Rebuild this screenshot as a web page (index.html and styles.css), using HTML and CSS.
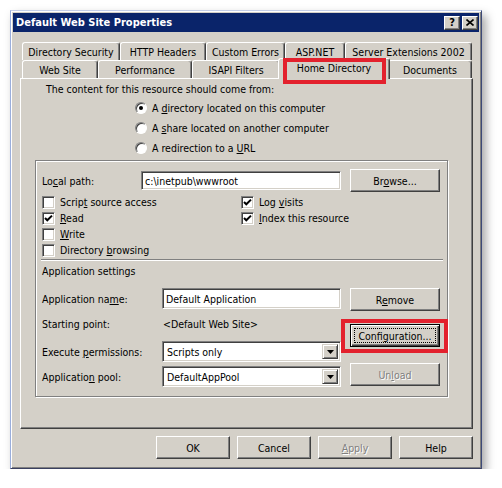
FILE: index.html
```html
<!DOCTYPE html>
<html lang="en">
<head>
    <meta charset="UTF-8">
    <title>Default Web Site Properties</title>
    <link rel="stylesheet" href="styles.css">
</head>
<body>
    <div class="window">

        <div class="titlebar">
            <span class="title">Default Web Site Properties</span>
            <div class="title-buttons">
                <span class="tbtn">?</span>
                <span class="tbtn">
                    <svg width="8" height="7" viewBox="0 0 8 7">
                        <path d="M0.5 0.5 L7.5 6.5 M7.5 0.5 L0.5 6.5" stroke="#000" stroke-width="1.6" fill="none"/>
                    </svg>
                </span>
            </div>
        </div>

        <div class="dialog">

            <div class="tab-row back">
                <div class="tab">Directory Security</div>
                <div class="tab">HTTP Headers</div>
                <div class="tab">Custom Errors</div>
                <div class="tab">ASP.NET</div>
                <div class="tab">Server Extensions 2002</div>
            </div>
            <div class="tab-row front">
                <div class="tab">Web Site</div>
                <div class="tab">Performance</div>
                <div class="tab">ISAPI Filters</div>
                <div class="tab selected marked">Home Directory</div>
                <div class="tab">Documents</div>
            </div>

            <div class="panel">
                <p class="intro">The content for this resource should come from:</p>

                <div class="source-list">
                    <div class="radio-row"><span class="radio checked"></span><span>A <u>d</u>irectory located on this computer</span></div>
                    <div class="radio-row"><span class="radio"></span><span>A <u>s</u>hare located on another computer</span></div>
                    <div class="radio-row"><span class="radio"></span><span>A redirection to a <u>U</u>RL</span></div>
                </div>

                <div class="group">
                    <div class="path-row">
                        <span class="path-label">Lo<u>c</u>al path:</span>
                        <div class="field path-field">c:\inetpub\wwwroot</div>
                        <button class="btn"><span>Br<u>o</u>wse...</span></button>
                    </div>

                    <div class="checks">
                        <div class="check-col">
                            <div class="check-row"><span class="checkbox"></span><span>Scrip<u>t</u> source access</span></div>
                            <div class="check-row"><span class="checkbox checked"><svg width="9" height="9" viewBox="0 0 9 9"><path d="M1 4 L3.3 6.3 L8 1.6" stroke="#000" stroke-width="2" fill="none"/></svg></span><span><u>R</u>ead</span></div>
                            <div class="check-row"><span class="checkbox"></span><span><u>W</u>rite</span></div>
                            <div class="check-row"><span class="checkbox"></span><span>Directory <u>b</u>rowsing</span></div>
                        </div>
                        <div class="check-col">
                            <div class="check-row"><span class="checkbox checked"><svg width="9" height="9" viewBox="0 0 9 9"><path d="M1 4 L3.3 6.3 L8 1.6" stroke="#000" stroke-width="2" fill="none"/></svg></span><span>Log <u>v</u>isits</span></div>
                            <div class="check-row"><span class="checkbox checked"><svg width="9" height="9" viewBox="0 0 9 9"><path d="M1 4 L3.3 6.3 L8 1.6" stroke="#000" stroke-width="2" fill="none"/></svg></span><span><u>I</u>ndex this resource</span></div>
                        </div>
                    </div>

                    <div class="separator"></div>

                    <div class="app-heading">Application settings</div>

                    <div class="app-settings">
                        <div class="app-fields">
                            <div class="app-row name-row">
                                <span class="app-label">Application na<u>m</u>e:</span>
                                <div class="field app-field">Default Application</div>
                            </div>
                            <div class="app-row start-row">
                                <span class="app-label">Starting point:</span>
                                <span class="app-value">&lt;Default Web Site&gt;</span>
                            </div>
                            <div class="app-row exec-row">
                                <span class="app-label">Execute <u>p</u>ermissions:</span>
                                <div class="field select">
                                    <span class="select-text">Scripts only</span>
                                    <span class="drop"><svg width="7" height="4" viewBox="0 0 7 4"><path d="M0 0 H7 L3.5 4 Z" fill="#000"/></svg></span>
                                </div>
                            </div>
                            <div class="app-row pool-row">
                                <span class="app-label">Applicatio<u>n</u> pool:</span>
                                <div class="field select">
                                    <span class="select-text">DefaultAppPool</span>
                                    <span class="drop"><svg width="7" height="4" viewBox="0 0 7 4"><path d="M0 0 H7 L3.5 4 Z" fill="#000"/></svg></span>
                                </div>
                            </div>
                        </div>

                        <div class="app-buttons">
                            <button class="btn"><span>R<u>e</u>move</span></button>
                            <button class="btn focused marked config"><span class="focus-ring"><span>Confi<u>g</u>uration...</span></span></button>
                            <button class="btn disabled unload"><span>Un<u>l</u>oad</span></button>
                        </div>
                    </div>
                </div>
            </div>

            <div class="footer">
                <button class="btn">OK</button>
                <button class="btn">Cancel</button>
                <button class="btn disabled"><span><u>A</u>pply</span></button>
                <button class="btn">Help</button>
            </div>

        </div>
    </div>
</body>
</html>
```

FILE: styles.css
```css
* {
    box-sizing: border-box;
}

body {
    margin: 0;
    background-color: #fff;
    font-family: "DejaVu Sans Condensed", "Liberation Sans", sans-serif;
    font-size: 10.5px;
    color: #000;
}

u {
    text-decoration: underline;
    text-underline-offset: 1px;
}

.window {
    width: 472px;
    height: 459px;
    margin: 10px 0 0 10px;
    padding: 2px;
    background-color: #d4d0c8;
    border: 1px solid;
    border-color: #c5cfe8 #3d4a78 #3a4060 #9aaedc;
    box-shadow: inset 1px 1px #fff, inset -1px -1px #808080, 4px 5px 9px rgba(0, 0, 0, 0.35);
    display: flex;
    flex-direction: column;
}

/* title bar */

.titlebar {
    height: 19px;
    background-color: #0a246a;
    color: #fff;
    display: flex;
    align-items: center;
    justify-content: space-between;
    padding: 0 1px 0 3px;
}

.title {
    font-weight: bold;
    font-size: 11px;
}

.title-buttons {
    display: flex;
    gap: 2px;
}

.tbtn {
    width: 16px;
    height: 14px;
    background-color: #d4d0c8;
    border: 1px solid;
    border-color: #fff #404040 #404040 #fff;
    box-shadow: inset -1px -1px #808080;
    display: flex;
    align-items: center;
    justify-content: center;
    color: #000;
    font-weight: bold;
    font-size: 11px;
    line-height: 1;
}

/* tabs */

.dialog {
    flex: 1;
    padding: 10px 6px 0 7px;
    display: flex;
    flex-direction: column;
}

.tab-row {
    display: flex;
    height: 18px;
    padding-left: 2px;
}

.tab {
    height: 18px;
    border: 1px solid;
    border-bottom: none;
    border-color: #fff #404040 transparent #fff;
    border-radius: 3px 3px 0 0;
    box-shadow: inset -1px 0 #808080;
    padding-top: 1px;
    line-height: 16px;
    text-align: center;
    white-space: nowrap;
}

.back .tab:nth-child(1) { width: 98px; }
.back .tab:nth-child(2) { width: 86px; }
.back .tab:nth-child(3) { width: 79px; }
.back .tab:nth-child(4) { width: 60px; }
.back .tab:nth-child(5) { width: 127px; }

.front .tab:nth-child(1) { width: 76px; }
.front .tab:nth-child(2) { width: 94px; }
.front .tab:nth-child(3) { width: 88px; }
.front .tab:nth-child(4) { width: 108px; }
.front .tab:nth-child(5) { width: 84px; }

.front .tab.selected {
    position: relative;
    z-index: 2;
    width: 112px;
    height: 21px;
    margin: -2px -2px -1px;
    background-color: #d4d0c8;
}

.tab.marked::after {
    content: "";
    position: absolute;
    left: 4px;
    right: 3px;
    top: -1px;
    bottom: -5px;
    border: 4px solid #e3212d;
}

/* panel */

.panel {
    height: 351px;
    border: 1px solid;
    border-color: #fff #404040 #404040 #fff;
    box-shadow: inset -1px -1px #808080;
    padding-top: 3px;
}

.intro {
    margin: 0 0 0 25px;
    line-height: 14px;
}

.source-list {
    margin: 2px 0 0 114px;
}

.radio-row {
    height: 20px;
    display: flex;
    align-items: center;
    gap: 5px;
}

.radio {
    width: 12px;
    height: 12px;
    border-radius: 50%;
    border: 1px solid;
    border-color: #808080 #fff #fff #808080;
    background-color: #fff;
    box-shadow: inset 1px 1px #404040;
    display: flex;
    align-items: center;
    justify-content: center;
}

.radio.checked::after {
    content: "";
    width: 4px;
    height: 4px;
    border-radius: 50%;
    background-color: #000;
}

.group {
    width: 413px;
    margin: 2px 0 0 14px;
    padding: 8px 7px 9px 6px;
    border: 1px solid #808080;
    box-shadow: inset 1px 1px #fff, 1px 1px #fff;
}

.path-row {
    height: 23px;
    display: flex;
    align-items: center;
}

.path-label {
    width: 99px;
}

.field {
    height: 19px;
    background-color: #fff;
    border: 1px solid;
    border-color: #808080 #fff #fff #808080;
    box-shadow: inset 1px 1px #404040, inset -1px -1px #d4d0c8;
    padding: 0 3px;
    display: flex;
    align-items: center;
    white-space: nowrap;
}

.path-field {
    width: 200px;
    margin-right: 9px;
}

.checks {
    display: flex;
    margin-top: 2px;
}

.check-col {
    width: 200px;
}

.check-row {
    height: 16px;
    display: flex;
    align-items: center;
    gap: 5px;
}

.checkbox {
    width: 13px;
    height: 13px;
    background-color: #fff;
    border: 1px solid;
    border-color: #808080 #fff #fff #808080;
    box-shadow: inset 1px 1px #404040, inset -1px -1px #d4d0c8;
    display: flex;
    align-items: center;
    justify-content: center;
}

.separator {
    height: 2px;
    margin: 1px -3px 0 -1px;
    border-top: 1px solid #808080;
    border-bottom: 1px solid #fff;
}

.app-heading {
    margin-top: 3px;
    line-height: 14px;
}

.app-settings {
    display: flex;
    justify-content: space-between;
    margin-top: 10px;
}

.app-fields {
    width: 299px;
}

.app-row {
    display: flex;
    align-items: center;
    height: 21px;
}

.app-label {
    width: 120px;
}

.app-value {
    padding-left: 1px;
}

.app-field {
    width: 179px;
    height: 21px;
}

.start-row {
    height: 16px;
    margin-top: 7px;
}

.exec-row {
    margin-top: 9px;
}

.pool-row {
    margin-top: 4px;
}

.select {
    width: 179px;
    height: 21px;
    padding: 2px 2px 2px 4px;
}

.select-text {
    flex: 1;
}

.drop {
    width: 16px;
    height: 100%;
    background-color: #d4d0c8;
    border: 1px solid;
    border-color: #d4d0c8 #404040 #404040 #d4d0c8;
    box-shadow: inset 1px 1px #fff, inset -1px -1px #808080;
    display: flex;
    align-items: center;
    justify-content: center;
}

.app-buttons {
    display: flex;
    flex-direction: column;
}

.config {
    margin-top: 13px;
}

.unload {
    margin-top: 16px;
}

/* buttons */

.btn {
    width: 90px;
    height: 23px;
    padding: 0;
    background-color: #d4d0c8;
    border: 1px solid;
    border-color: #fff #404040 #404040 #fff;
    box-shadow: inset -1px -1px #808080;
    font: inherit;
    color: #000;
    display: flex;
    align-items: center;
    justify-content: center;
}

.btn.focused {
    position: relative;
    padding: 3px;
    border-color: #000;
    box-shadow: inset 1px 1px #fff, inset -1px -1px #404040, inset -2px -2px #808080;
}

.focus-ring {
    flex: 1;
    align-self: stretch;
    border: 1px dotted #000;
    display: flex;
    align-items: center;
    justify-content: center;
}

.btn.marked::after {
    content: "";
    position: absolute;
    left: -10px;
    right: -9px;
    top: -6px;
    bottom: -7px;
    border: 4px solid #e3212d;
}

.btn.disabled {
    color: #808080;
    text-shadow: 1px 1px #fff;
}

.footer {
    display: flex;
    justify-content: flex-end;
    gap: 7px;
    margin-top: 7px;
}

.footer .btn {
    width: 74px;
}
```
